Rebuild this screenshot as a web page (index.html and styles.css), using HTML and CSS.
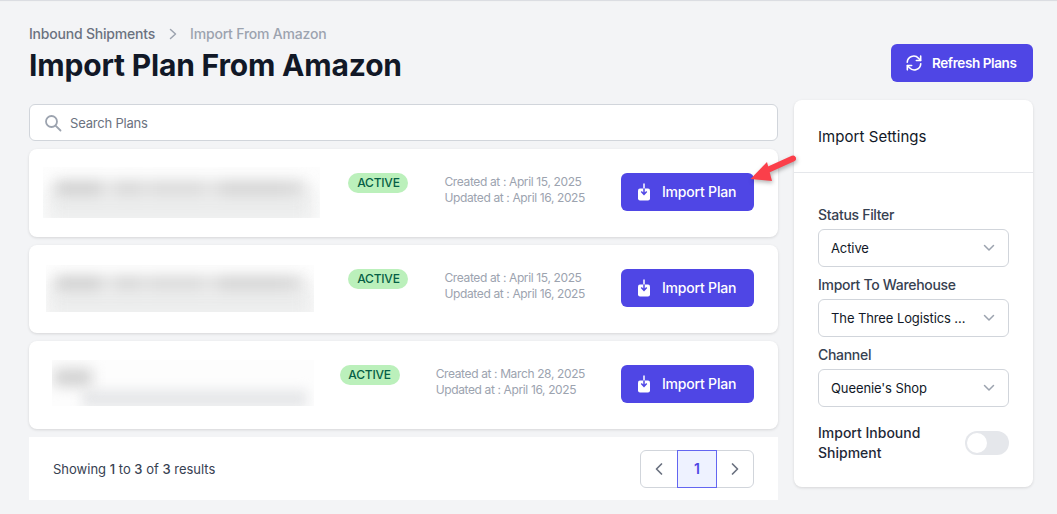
FILE: index.html
```html
<!DOCTYPE html>
<html lang="en">
<head>
  <meta charset="UTF-8">
  <meta name="viewport" content="width=device-width, initial-scale=1.0">
  <title>Import Plan From Amazon</title>
  <link rel="stylesheet" href="styles.css">
</head>
<body>
  <div class="page">
    <header class="page-header">
      <div>
        <nav class="breadcrumb">
          <a href="#">Inbound Shipments</a>
          <svg class="crumb-sep" viewBox="0 0 10 12" width="10" height="12" fill="none" stroke="currentColor" stroke-width="1.5" stroke-linecap="round" stroke-linejoin="round"><path d="M2.5 1.5 7.5 6l-5 4.500"/></svg>
          <span>Import From Amazon</span>
        </nav>
        <h1>Import Plan From Amazon</h1>
      </div>
      <button class="btn btn-refresh" type="button">
        <svg viewBox="0 0 20 20" width="18" height="18" fill="none" stroke="currentColor" stroke-width="1.8" stroke-linecap="round" stroke-linejoin="round"><path d="M2.500 9.200A7.200 7.200 0 0 1 15 4.700l2.200 2.300"/><path d="M17.400 2.400v4.800h-4.800"/><path d="M17.500 10.800A7.200 7.200 0 0 1 5 15.300L2.800 13"/><path d="M2.600 17.600v-4.800h4.800"/></svg>
        Refresh Plans
      </button>
    </header>

    <div class="layout">
      <main class="plans">
        <label class="search">
          <svg viewBox="0 0 18 18" width="18" height="18" fill="none" stroke="#9ca3af" stroke-width="1.8" stroke-linecap="round"><circle cx="7.500" cy="7.500" r="5.500"/><path d="m11.800 11.800 4.700 4.700"/></svg>
          <input type="text" placeholder="Search Plans">
        </label>

        <article class="plan">
          <div class="plan-name"><div class="redacted redacted-one"><b></b><i></i></div></div>
          <span class="badge">ACTIVE</span>
          <div class="dates">
            <div>Created at : April 15, 2025</div>
            <div>Updated at : April 16, 2025</div>
          </div>
          <button class="btn btn-import" type="button">
            <svg viewBox="0 0 14 18" width="14" height="18"><rect x="1" y="5.500" width="12" height="12" rx="2" fill="#fff"/><path d="M7 0.500V5.500" stroke="#fff" stroke-width="1.500"/><path d="M7 5.500v5.500M4.300 8.500 7 11.400l2.700-2.900" fill="none" stroke="#4f46e5" stroke-width="1.500"/></svg>
            <span>Import Plan</span>
          </button>
        </article>

        <article class="plan">
          <div class="plan-name"><div class="redacted redacted-two"><b></b><i></i></div></div>
          <span class="badge">ACTIVE</span>
          <div class="dates">
            <div>Created at : April 15, 2025</div>
            <div>Updated at : April 16, 2025</div>
          </div>
          <button class="btn btn-import" type="button">
            <svg viewBox="0 0 14 18" width="14" height="18"><rect x="1" y="5.500" width="12" height="12" rx="2" fill="#fff"/><path d="M7 0.500V5.500" stroke="#fff" stroke-width="1.500"/><path d="M7 5.500v5.500M4.300 8.500 7 11.400l2.700-2.900" fill="none" stroke="#4f46e5" stroke-width="1.500"/></svg>
            <span>Import Plan</span>
          </button>
        </article>

        <article class="plan">
          <div class="plan-name"><div class="redacted redacted-three"><b></b><i></i></div></div>
          <span class="badge">ACTIVE</span>
          <div class="dates">
            <div>Created at : March 28, 2025</div>
            <div>Updated at : April 16, 2025</div>
          </div>
          <button class="btn btn-import" type="button">
            <svg viewBox="0 0 14 18" width="14" height="18"><rect x="1" y="5.500" width="12" height="12" rx="2" fill="#fff"/><path d="M7 0.500V5.500" stroke="#fff" stroke-width="1.500"/><path d="M7 5.500v5.500M4.300 8.500 7 11.400l2.700-2.900" fill="none" stroke="#4f46e5" stroke-width="1.500"/></svg>
            <span>Import Plan</span>
          </button>
        </article>

        <footer class="results">
          <p>Showing <strong>1</strong> to <strong>3</strong> of <strong>3</strong> results</p>
          <div class="pager">
            <a href="#"><svg viewBox="0 0 10 14" width="10" height="14" fill="none" stroke="currentColor" stroke-width="1.700" stroke-linecap="round" stroke-linejoin="round"><path d="M7.500 2 2.500 7l5 5"/></svg></a>
            <a href="#" class="current">1</a>
            <a href="#"><svg viewBox="0 0 10 14" width="10" height="14" fill="none" stroke="currentColor" stroke-width="1.700" stroke-linecap="round" stroke-linejoin="round"><path d="m2.500 2 5 5-5 5"/></svg></a>
          </div>
        </footer>
      </main>

      <aside class="settings">
        <h2>Import Settings</h2>
        <div class="settings-body">
          <div class="field">
            <label>Status Filter</label>
            <div class="select">
              <span>Active</span>
              <svg viewBox="0 0 12 8" width="12" height="8" fill="none" stroke="currentColor" stroke-width="1.500" stroke-linecap="round" stroke-linejoin="round"><path d="m1.500 1.500 4.500 4.500 4.500-4.500"/></svg>
            </div>
          </div>
          <div class="field">
            <label>Import To Warehouse</label>
            <div class="select">
              <span>The Three Logistics ...</span>
              <svg viewBox="0 0 12 8" width="12" height="8" fill="none" stroke="currentColor" stroke-width="1.500" stroke-linecap="round" stroke-linejoin="round"><path d="m1.500 1.500 4.500 4.500 4.500-4.500"/></svg>
            </div>
          </div>
          <div class="field">
            <label>Channel</label>
            <div class="select">
              <span>Queenie's Shop</span>
              <svg viewBox="0 0 12 8" width="12" height="8" fill="none" stroke="currentColor" stroke-width="1.500" stroke-linecap="round" stroke-linejoin="round"><path d="m1.500 1.500 4.500 4.500 4.500-4.500"/></svg>
            </div>
          </div>
          <div class="toggle-row">
            <span>Import Inbound Shipment</span>
            <div class="toggle"><i></i></div>
          </div>
        </div>
      </aside>
    </div>

    <svg class="callout" viewBox="0 0 50 32" width="50" height="32">
      <path d="M43 5.500 12 19.500" stroke="#fb3f4a" stroke-width="6" stroke-linecap="round"/>
      <path d="M0.500 26 17 9l5 19z" fill="#fb3f4a"/>
    </svg>
  </div>
</body>
</html>
```

FILE: styles.css
```css
:root {
  --indigo: #4f46e5;
  --line: #d1d5db;
  --bg: #f3f4f6;
}

* {
  margin: 0;
  padding: 0;
  box-sizing: border-box;
}

body {
  font-family: Inter, 'Noto Sans', Arial, sans-serif;
  background-color: var(--bg);
  color: #111827;
  overflow: hidden;
}

.page {
  position: relative;
  height: 514px;
  padding: 24px 24px 0 29px;
  box-shadow: inset 0 2px 1px -1px #d9dbe0;
}

.page-header {
  display: flex;
  justify-content: space-between;
  align-items: flex-end;
}

.breadcrumb {
  display: flex;
  align-items: center;
  font-size: 14px;
  line-height: 20px;
  font-weight: 500;
  letter-spacing: -0.2px;
  color: #9ca3af;
}

.breadcrumb a {
  color: #6b7280;
  text-decoration: none;
}

.crumb-sep {
  margin: 0 12px 0 13px;
}

h1 {
  font-size: 30px;
  line-height: 36px;
  font-weight: 700;
  letter-spacing: -0.18px;
  margin-top: 3px;
}

.btn {
  display: inline-flex;
  align-items: center;
  height: 38px;
  border: 0;
  border-radius: 6px;
  background-color: var(--indigo);
  color: #fff;
  font-family: inherit;
  font-size: 14px;
  font-weight: 600;
}

.btn-refresh {
  width: 142px;
  padding-left: 14px;
  gap: 9px;
  margin-bottom: 1px;
  font-size: 13.5px;
  letter-spacing: -0.4px;
}

.btn-import {
  width: 133px;
  padding-left: 16px;
  gap: 11px;
  flex-shrink: 0;
  font-weight: 500;
  letter-spacing: -0.2px;
}

.btn-import span {
  margin-top: -1px;
}

.layout {
  display: grid;
  grid-template-columns: 749px 239px;
  gap: 16px;
  align-items: start;
  margin-top: 17px;
}

.plans {
  display: flex;
  flex-direction: column;
  gap: 8px;
  padding-top: 4px;
}

.search {
  display: flex;
  align-items: center;
  gap: 8px;
  height: 37px;
  padding-left: 14px;
  background-color: #fff;
  border: 1px solid var(--line);
  border-radius: 6px;
}

.search input {
  flex: 1;
  border: 0;
  outline: 0;
  font-family: inherit;
  font-size: 13px;
  letter-spacing: -0.2px;
}

.search input::placeholder {
  color: #6b7280;
}

.plan {
  display: flex;
  align-items: flex-start;
  height: 88px;
  padding: 24px;
  background-color: #fff;
  border-radius: 8px;
  box-shadow: 0 1px 3px rgba(0, 0, 0, 0.12);
}

.plan-name {
  flex: 1;
  min-width: 0;
}

.redacted {
  position: relative;
  overflow: hidden;
  background-color: #fdfdfd;
}

.redacted i,
.redacted b {
  position: absolute;
  display: block;
}

.redacted i {
  height: 15px;
  background: linear-gradient(90deg, #cfcfcf 0 17%, #eaeaea 21%, #d6d6d6 26% 33%, #e2e2e2 36%, #d9d9d9 40% 58%, #e6e6e6 62%, #d3d3d3 68% 90%, #dcdcdc 100%);
  filter: blur(7px);
}

.redacted b {
  height: 34px;
  background-color: #eceded;
  filter: blur(9px);
}

.redacted-one {
  width: 277px;
  height: 51px;
  margin: -6px 0 0 -10px;
}

.redacted-one i {
  left: 12px;
  top: 14px;
  width: 250px;
}

.redacted-one b {
  left: 4px;
  top: 24px;
  width: 268px;
}

.redacted-two {
  width: 268px;
  height: 47px;
  margin: -4px 0 0 -7px;
}

.redacted-two i {
  left: 9px;
  top: 11px;
  width: 248px;
}

.redacted-two b {
  left: 0;
  top: 22px;
  width: 268px;
}

.redacted-three {
  width: 262px;
  height: 46px;
  margin: -5px 0 0 -1px;
}

.redacted-three i {
  left: 2px;
  top: 9px;
  width: 38px;
  height: 17px;
  background: #cfcfcf;
}

.redacted-three b {
  left: 30px;
  top: 30px;
  width: 225px;
  height: 18px;
  background-color: #e6e7e9;
  filter: blur(6px);
}

.badge {
  width: 60px;
  height: 20px;
  border-radius: 10px;
  background-color: #bbf0bb;
  color: #065f46;
  font-size: 12px;
  line-height: 20px;
  font-weight: 500;
  letter-spacing: -0.2px;
  text-align: center;
}

.dates {
  margin: 1px 36px 0;
  font-size: 12px;
  line-height: 16px;
  letter-spacing: -0.37px;
  color: #9ca3af;
}

.results {
  display: flex;
  justify-content: space-between;
  align-items: center;
  height: 63px;
  padding: 0 24px;
  background-color: #fff;
  font-size: 13px;
  color: #374151;
}

.results strong {
  font-weight: 500;
}

.pager {
  display: flex;
  height: 38px;
  border: 1px solid var(--line);
  border-radius: 6px;
}

.pager a {
  display: flex;
  align-items: center;
  justify-content: center;
  width: 36px;
  color: #6b7280;
  text-decoration: none;
}

.pager .current {
  width: 40px;
  margin: -1px 0;
  background-color: #eef2ff;
  border: 1px solid #6366f1;
  color: var(--indigo);
  font-size: 14px;
  font-weight: 600;
}

.settings {
  background-color: #fff;
  border-radius: 8px;
  box-shadow: 0 1px 3px rgba(0, 0, 0, 0.12);
}

.settings h2 {
  height: 73px;
  padding: 0 24px;
  font-size: 15px;
  line-height: 73px;
  font-weight: 400;
  letter-spacing: 0.05px;
  border-bottom: 1px solid #e5e7eb;
}

.settings-body {
  display: flex;
  flex-direction: column;
  gap: 8px;
  padding: 32px 24px 24px;
}

.field label {
  display: block;
  margin-bottom: 4px;
  font-size: 14px;
  line-height: 20px;
  font-weight: 500;
  letter-spacing: -0.3px;
  color: #374151;
}

.select {
  display: flex;
  justify-content: space-between;
  align-items: center;
  height: 38px;
  padding: 0 13px 0 12px;
  border: 1px solid var(--line);
  border-radius: 6px;
  font-size: 13px;
  color: #9ca3af;
}

.select span {
  color: #111827;
  letter-spacing: -0.1px;
}

.toggle-row {
  display: flex;
  justify-content: space-between;
  align-items: center;
  margin-top: 8px;
  font-size: 14px;
  line-height: 20px;
  font-weight: 500;
  color: #1f2937;
}

.toggle-row span {
  width: 130px;
}

.toggle {
  width: 44px;
  height: 24px;
  padding: 2px;
  border-radius: 12px;
  background-color: #e5e7eb;
}

.toggle i {
  display: block;
  width: 20px;
  height: 20px;
  border-radius: 50%;
  background-color: #fff;
}

.callout {
  position: absolute;
  left: 750px;
  top: 153px;
  filter: drop-shadow(1px 2px 2px rgba(0, 0, 0, 0.3));
}
```
